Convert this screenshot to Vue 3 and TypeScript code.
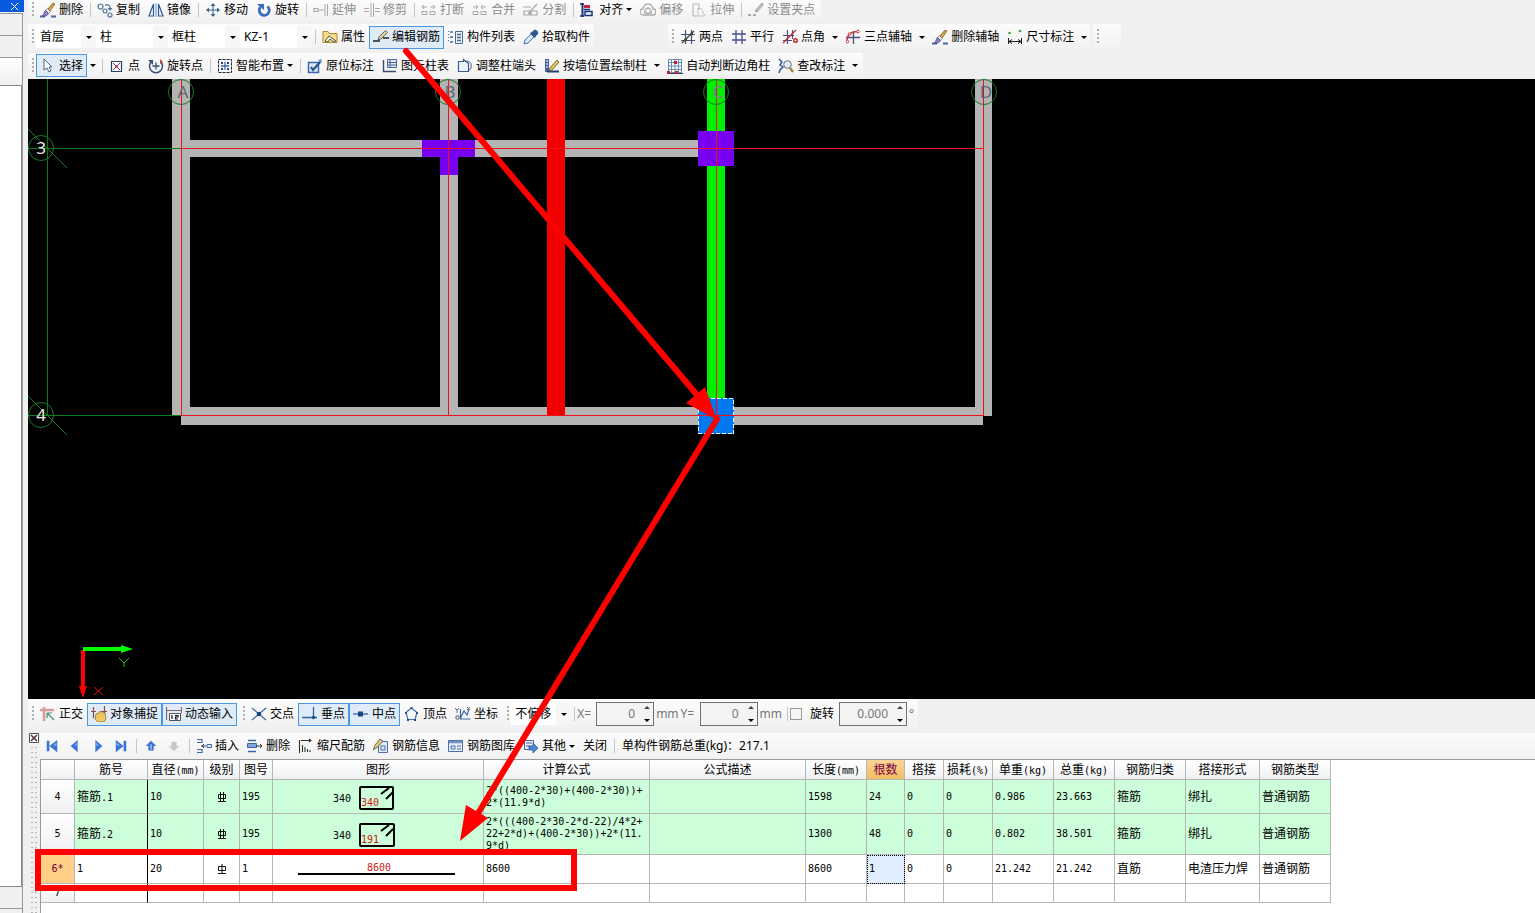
<script setup lang="ts">
import { ref } from 'vue'

interface Tool {
  kind: 'button' | 'select' | 'sep' | 'grip'
  icon?: string
  label?: string
  name?: string
  size?: 'short' | 'long'
  active?: boolean
  disabled?: boolean
  menu?: 'inline' | 'split'
}

interface Run {
  text: string
  cjk: boolean
}

interface BarRow {
  no: string
  name: string
  diameter: string
  grade: 'double' | 'single' | ''
  shapeNo: string
  shape: 'hoop' | 'hoopWide' | 'line' | ''
  shapeLabel: string
  formula: string[]
  rest: string[]
  height: 'row-normal' | 'row-tall' | 'row-low' | 'row-short'
  current?: boolean
}

const sep: Tool = { kind: 'sep' }
const grip: Tool = { kind: 'grip' }
const tool = (icon: string, label: string, extra: Partial<Tool> = {}): Tool => ({ kind: 'button', icon, label, ...extra })
const choice = (label: string, name: string, size: 'short' | 'long'): Tool => ({ kind: 'select', label, name, size })

const icons: Record<string, string> = {
  brush: '<path d="M0 14.5h5M11 14.5h5" stroke="#4a68a8" stroke-width="2"/><path d="M13 1l2 1-5 7-2-2z" fill="#d8a840" stroke="#6a5020" stroke-width=".7"/><path d="M7.500 6.500l3 3-2 2-3-3z" fill="#e8e8f0" stroke="#555" stroke-width=".6"/><path d="M5.500 8.500l3 3c-2 3-4 3-6 2 2-1 1-3 3-5z" fill="#8a86c8" stroke="#3c3870" stroke-width=".7"/>',
  copy: '<g fill="none" stroke="#52749c" stroke-width="1.200"><circle cx="3.500" cy="4.500" r="2.500"/><circle cx="8" cy="9" r="2"/><circle cx="13" cy="13" r="2"/><path d="M8 3.500a3 3 0 0 1 5 2.500"/></g><path d="M10.500 6h5L13 9z" fill="#52749c"/>',
  mirror: '<g fill="none" stroke="#2d5d9c" stroke-width="1.200"><path d="M5.500 2v12H1zM10.500 2v12H15z"/></g><path d="M8 1v14" stroke="#6f92c0" stroke-width="1"/>',
  move: '<path d="M8 1l2.500 3h-2v3.500H12v-2L15 8l-3 2.500v-2H8.500V12h2L8 15l-2.500-3h2V8.500H4v2L1 8l3-2.500v2h3.500V4h-2z" fill="#38608f"/>',
  rotate: '<path d="M4.500 5a5 5 0 1 0 7-.5" fill="none" stroke="#3c69b8" stroke-width="2.800"/><path d="M1 2h7v6z" fill="#3c69b8"/>',
  extend: '<g fill="none" stroke="#aaa"><path d="M1 6.500h4v3H1zM6 8h5" stroke-width="1.200"/><path d="M12 2v12M14.500 2v12"/></g>',
  trim: '<g fill="none" stroke="#aaa"><path d="M0 6.500h5M0 9.500h5M11 6.500h5M11 9.500h5M7 1v14M9.500 1v14"/></g>',
  breakat: '<g fill="none" stroke="#aaa"><path d="M1 5h5M9 5h5M3 3L1 5l2 2M12 3l2 2-2 2M1 9.500h5v3H1zM9 9.500h5v3H9z"/></g>',
  merge: '<g fill="none" stroke="#aaa"><path d="M1 5h5M9 5h5M4 3l2 2-2 2M11 3L9 5l2 2M1 9.500h5v3H1zM9 9.500h5v3H9z"/></g>',
  split: '<g fill="none" stroke="#aaa"><path d="M0 5h8M1 13V9h6v4zM8 13V9h6v4zM5 12l9-10" stroke-width="1.200"/></g>',
  align: '<path d="M2.500 1v14" stroke="#16367a" stroke-width="2"/><path d="M4 3h6v3H4z" fill="#d02040"/><path d="M5 9.500h7v4H5zM4 7.500h6" fill="none" stroke="#16367a" stroke-width="1.500"/><path d="M0 2h4M0 14h4" stroke="#16367a" stroke-width="1.500"/>',
  offset: '<g fill="none" stroke="#aaa" stroke-width="1.300"><path d="M3 13a3 3 0 0 1 0-6 5 5 0 0 1 10 0 3 3 0 0 1 0 6zM5 11a2 2 0 0 1 1-3 2 2 0 0 1 4 0 2 2 0 0 1 1 3z"/></g>',
  stretch: '<g fill="none" stroke="#b0b0b0"><path d="M2 2h6v4M2 2v12h4"/><path d="M7 6.500h3l4 7.500H7z" stroke-dasharray="2 1"/></g>',
  node: '<path d="M0 13h3M5 13h3" stroke="#aaa" stroke-width="2"/><path d="M14 1l1 2-6 7-2-1z" fill="#ccc" stroke="#999"/>',
  props: '<path d="M1 2.500h5l1 2h8v9H1z" fill="#f5dc8a" stroke="#b08828"/><path d="M3 12l4-5 7 5-2 1-4-3-2 3z" fill="#fff3c8" stroke="#555"/>',
  rebar: '<path d="M0 12h7M10 9h6" stroke="#222" stroke-width="1.400"/><path d="M12.500 1.500l2 2L8 10l-3 1 1-3z" fill="#e3cf9a" stroke="#444" stroke-width=".8"/>',
  list: '<g fill="none" stroke="#4c6894"><path d="M7.500 2.500h7v12h-7z" fill="#e8eef8"/><path d="M9 5.500h4M9 8.500h4M9 11.500h4M2 3h3M2 8h3M2 13h3" stroke-width="1.500"/><path d="M.5 2v12" stroke-dasharray="1 2"/></g>',
  dropper: '<path d="M1 15l1-4 6-6 3 3-6 6z" fill="#d9ecff" stroke="#3b6ea5"/><path d="M7 4l2-1 2-2c2-1 5 2 4 4l-2 2-1 2z" fill="#2c5a94"/>',
  twopoint: '<path d="M1 5.500h14M1 11.500h14M5.500 1v14M11.500 1v14" stroke="#4a5078" stroke-width="1.200"/><path d="M2 14L14 2" stroke="#3a5030" stroke-width="1.400"/><g fill="#3a5030"><circle cx="5.500" cy="11" r="1.500"/><circle cx="11.500" cy="5" r="1.500"/></g>',
  parallel: '<path d="M1 5h14M1 11h14M5 1v14M11 1v14" stroke="#4a4c88" stroke-width="1.300"/>',
  angle: '<path d="M1 6.500h11M1 11.500h9M5.500 1v14M10.500 1v9" stroke="#4a4c88" stroke-width="1.200"/><path d="M1 14L14 1" stroke="#c02828" stroke-width="1.300"/><circle cx="13.500" cy="11.500" r="1.800" fill="none" stroke="#c02828" stroke-width="1.400"/>',
  threepoint: '<path d="M1 8.500h14M8.500 2v13" stroke="#4a4c88" stroke-width="1.300"/><path d="M2 12C2 6 6 2.500 13 2.500" fill="none" stroke="#c83c3c" stroke-width="1.300"/><g fill="#fff" stroke="#c83c3c"><circle cx="2.500" cy="12.500" r="1.300"/><circle cx="4.500" cy="5" r="1.300"/><circle cx="13" cy="2.500" r="1.300"/></g>',
  dimension: '<path d="M1.500 9v6M14.500 9v6M2 12.500h12M5 10.500l-3 2 3 2M11 10.500l3 2-3 2" fill="none" stroke="#222"/><g fill="#49a04c"><circle cx="2.500" cy="4" r="1.300"/><circle cx="13" cy="2" r="1.300"/></g>',
  cursor: '<path d="M4 1v11l3-2 2 4 2-1-2-4h3z" fill="#fff" stroke="#51627c"/>',
  point: '<path d="M2.500 3.500h10v10h-10z" fill="#fff" stroke="#24406e" stroke-width="1.200"/><path d="M4 5l7 7M11 5l-7 7" stroke="#7a3a66"/><circle cx="7.500" cy="8.500" r="1.200" fill="#c22"/>',
  rotpoint: '<path d="M3 4a6.500 6.500 0 1 0 10 0" fill="none" stroke="#3b4f74" stroke-width="1.500"/><path d="M0 2h5v5z" fill="#3b4f74"/><path d="M8 4.500v7M4.500 8h7" stroke="#3b4f74" stroke-width="1.300"/><path d="M12 1v5l3-2z" fill="#c04040"/>',
  smart: '<path d="M1.500 1.500h13v13h-13z" fill="#f4f8ff" stroke="#222" stroke-dasharray="3 1"/><path d="M8 4v8M4 8h8" stroke="#3f67a7" stroke-width="1.300"/><g fill="#26436e"><path d="M4 4h2v2H4zM10 4h2v2h-2zM4 10h2v2H4zM10 10h2v2h-2z"/></g>',
  insitu: '<path d="M1.500 4.500h10v10h-10z" fill="#dbe7f7" stroke="#3c68a8" stroke-width="1.500"/><path d="M4 9l2 3 8-9" fill="none" stroke="#25548f" stroke-width="2.200"/><path d="M11 2l4-1-1 4z" fill="#6b9bd0"/>',
  coltable: '<path d="M5.500 1.500h9v8h-9zM5 4.500h9M5 7h9M8 2v7" fill="#dfe9f8" stroke="#4a6798"/><path d="M1.500 2v12M1 13.500h13" stroke="#3a4c70" stroke-width="1.400"/>',
  adjust: '<path d="M1.500 3.500h5v-2l5 4v8h-10z" fill="#eef3fb" stroke="#3d5b8c" stroke-width="1.200"/><path d="M8 3c5 0 7 2 6 7l-2.500 3" fill="none" stroke="#3d5b8c"/>',
  wallcol: '<path d="M1 1h4v13H1z" fill="#47679c"/><path d="M2 3h2M2 6h2M2 9h2" stroke="#fff"/><path d="M3 13.500h12" stroke="#26436e" stroke-width="2"/><path d="M13 2l2 2-7 8-3 1 1-3z" fill="#ecc65a" stroke="#5a4a20" stroke-width=".8"/>',
  corner: '<path d="M1.500 1.500h13v13h-13zM4.500 1v14M8 1v14M11.500 1v14M1 4.500h14M1 8h14M1 11.500h14" fill="#fff" stroke="#6989b8"/><path d="M0 15.500h16" stroke="#26436e"/><g fill="#c42020"><path d="M7 3h3v3H7zM0 13h3v3H0zM8 13h3v3H8z"/></g>',
  check: '<path d="M1 1l3 3-2 3 3 2-3 3-1 3" stroke="#2f5c9c" fill="none" stroke-width="1.500"/><circle cx="9.500" cy="6.500" r="3.800" fill="#e6eef8" stroke="#667"/><path d="M12 10l3 4" stroke="#a88340" stroke-width="2.500"/>',
  ortho: '<path d="M0 4h14M4 1v14" stroke="#d89c9c" stroke-width="2.600"/><path d="M7 7l7 7M7 7v5M7 7h5" stroke="#4a8a78" stroke-width="1.200"/>',
  snap: '<path d="M0 5.500h5M2.500 1v11M10 5.500h6M13.500 0v8" stroke="#8a4a4a" stroke-width="1.200"/><path d="M5 8l3-1 1-2 2 1 1 1 2 0 1 6-2 3H7l-3-3z" fill="#efc75c" stroke="#8a6820" stroke-width=".7"/>',
  dyn: '<path d="M.5 1v13M15.500 1v6M1 4.500h14" stroke="#86646c" stroke-width="1.200"/><path d="M3.500 7.500h11v7h-11z" fill="#fff" stroke="#555"/><path d="M6 9v4M9 9.500h3v1.500H9.500V13H12" fill="none" stroke="#111" stroke-width="1.200"/>',
  cross: '<path d="M1 2l14 12M15 2L1 14" stroke="#3c6298" stroke-width="1.200"/><circle cx="8" cy="8" r="2.300" fill="#1c4484"/>',
  perp: '<path d="M0 11.500h15M11.500 1v11" stroke="#3463a2" stroke-width="1.300"/><circle cx="11.500" cy="11.500" r="1.800" fill="#24518e"/>',
  mid: '<path d="M0 8h15" stroke="#3463a2" stroke-width="1.300"/><path d="M5 5.500h5v5H5z" fill="#1d4680"/>',
  vertex: '<path d="M7.500 2L13 6.500l-2 7H4l-2-7z" fill="none" stroke="#4671a8" stroke-width="1.200"/><g fill="#24518e"><path d="M6.500 1h2v2h-2zM12 6h2v2h-2zM1 6h2v2H1zM3 13h2v2H3zM10 13h2v2h-2z"/></g>',
  coord: '<path d="M5.500 3v10h10M5 13l4-8 3 4 2-6" fill="none" stroke="#3a67a2" stroke-width="1.200"/><path d="M0 2l2 2 2-2M2 4v3M12 1l3 3M15 1l-3 3M1 10h3v3H1z" fill="none" stroke="#666"/>',
  first: '<path d="M2 2h3v12H2zM14 1v14L5 8z" fill="#3a74d8"/><path d="M13 4v3L9 8z" fill="#8db8f4"/>',
  prev: '<path d="M11 1v14L3 8z" fill="#3a74d8"/><path d="M10 4v3L7 8z" fill="#8db8f4"/>',
  next: '<path d="M5 1v14l8-7z" fill="#3a74d8"/><path d="M6 4v3l3 1z" fill="#8db8f4"/>',
  last: '<path d="M11 2h3v12h-3zM2 1v14l9-7z" fill="#3a74d8"/><path d="M3 4v3l4 1z" fill="#8db8f4"/>',
  up: '<path d="M8 2l6 6h-3v5H5V8H2z" fill="#3a70d0"/><path d="M7 6h2v6H7z" fill="#8db8f4"/>',
  down: '<path d="M8 14l6-6h-3V3H5v5H2z" fill="#c8c8c8"/>',
  insert: '<path d="M1 1.500h5v3H1M1 11.500h5v3H1" fill="none" stroke="#3c68a8" stroke-width="1.200"/><path d="M5 8h5M8 6L6 8l2 2" fill="none" stroke="#333"/><path d="M11 6.500h4.500v3H11z" fill="#dfe9f8" stroke="#3c68a8"/>',
  remove: '<path d="M1 2.500h8M1 13.500h8" stroke="#3c68a8" stroke-width="1.500"/><path d="M.5 5.500h9v4h-9z" fill="#7fa5da" stroke="#3c68a8"/><path d="M9 8h6M13 6l2 2-2 2" fill="none" stroke="#333"/>',
  scale: '<path d="M1.500 2v13M3 2.500h10M11 1l2 1.500L11 4M4.500 7v7M7 9v5M9.500 11v3M12 12v2" fill="none" stroke="#333" stroke-width="1.100"/>',
  info: '<path d="M5.500 3.500h9v11h-9zM8 12V8h4v4z" fill="#e1eaf7" stroke="#4d6fa1"/><path d="M0 12l5-3 5-6-3-2-5 6z" fill="#dfc27a" stroke="#555" stroke-width=".8"/>',
  library: '<path d="M.5 2.500h14v11H.5z" fill="#e6eefa" stroke="#4a6fa8"/><path d="M1 4h13" stroke="#6c92c8" stroke-width="2.500"/><path d="M3 8h4v3H3zM9 8h4M9 11h4" fill="none" stroke="#4a6fa8"/>',
  other: '<path d="M1.500 2.500h9v9h-9zM3 5h6M3 8h4" fill="#e8eefa" stroke="#4a6798"/><path d="M6 8h4V5l5 5-5 5v-3H6z" fill="#4f87d6" stroke="#2b579c" stroke-width=".8"/>',
}

const editRow: Tool[] = [
  grip, tool('brush', '删除'), sep, tool('copy', '复制'), tool('mirror', '镜像'), sep,
  tool('move', '移动'), tool('rotate', '旋转'), sep,
  tool('extend', '延伸', { disabled: true }), tool('trim', '修剪', { disabled: true }), sep,
  tool('breakat', '打断', { disabled: true }), tool('merge', '合并', { disabled: true }), tool('split', '分割', { disabled: true }), sep,
  tool('align', '对齐', { menu: 'inline' }), tool('offset', '偏移', { disabled: true }), tool('stretch', '拉伸', { disabled: true }), sep,
  tool('node', '设置夹点', { disabled: true }),
]
const componentRow: Tool[] = [
  grip, choice('首层', '楼层', 'short'), choice('柱', '构件类型', 'long'), choice('框柱', '构件类别', 'long'), choice('KZ-1', '构件', 'long'), sep,
  tool('props', '属性'), tool('rebar', '编辑钢筋', { active: true }), tool('list', '构件列表'), tool('dropper', '拾取构件'),
]
const axisRow: Tool[] = [
  grip, tool('twopoint', '两点'), tool('parallel', '平行'), tool('angle', '点角', { menu: 'split' }),
  tool('threepoint', '三点辅轴', { menu: 'split' }), tool('brush', '删除辅轴'), tool('dimension', '尺寸标注', { menu: 'split' }),
]
const drawRow: Tool[] = [
  grip, tool('cursor', '选择', { active: true, menu: 'split' }), sep, tool('point', '点'), tool('rotpoint', '旋转点'), sep,
  tool('smart', '智能布置', { menu: 'inline' }), sep, tool('insitu', '原位标注'), tool('coltable', '图元柱表'), tool('adjust', '调整柱端头'),
  tool('wallcol', '按墙位置绘制柱', { menu: 'split' }), tool('corner', '自动判断边角柱'), tool('check', '查改标注', { menu: 'split' }),
]
const modeRow: Tool[] = [grip, tool('ortho', '正交'), tool('snap', '对象捕捉', { active: true }), tool('dyn', '动态输入', { active: true })]
const snapRow: Tool[] = [
  grip, tool('cross', '交点'), tool('perp', '垂点', { active: true }), tool('mid', '中点', { active: true }), tool('vertex', '顶点'), tool('coord', '坐标'),
]
const offsetRow: Tool[] = [grip, choice('不偏移', '偏移方式', 'short'), sep]
const rebarRow: Tool[] = [
  tool('insert', '插入'), tool('remove', '删除'), tool('scale', '缩尺配筋'), tool('info', '钢筋信息'), tool('library', '钢筋图库'),
  tool('other', '其他', { menu: 'inline' }), { kind: 'button', label: '关闭' }, sep,
]
const groups = [
  { id: 'line-top', bars: [{ id: 'edit', tools: editRow }] },
  { id: 'line-middle', bars: [{ id: 'component', tools: componentRow }, { id: 'axes', tools: axisRow }, { id: 'spare', tools: [grip] }] },
  { id: 'line-draw', bars: [{ id: 'draw', tools: drawRow }] },
]
const bottomBars = [
  { id: 'mode', tools: modeRow },
  { id: 'snap', tools: snapRow },
  { id: 'shift', tools: offsetRow },
]
const navButtons = [
  { icon: 'first', title: '首行' }, { icon: 'prev', title: '上一行' }, { icon: 'next', title: '下一行' }, { icon: 'last', title: '末行' },
]

const headers = ['', '筋号', '直径(mm)', '级别', '图号', '图形', '计算公式', '公式描述', '长度(mm)', '根数', '搭接', '损耗(%)', '单重(kg)', '总重(kg)', '钢筋归类', '搭接形式', '钢筋类型']
const rows: BarRow[] = [
  { no: '4', name: '箍筋.1', diameter: '10', grade: 'double', shapeNo: '195', shape: 'hoop', shapeLabel: '340', formula: ['2*((400-2*30)+(400-2*30))+', '2*(11.9*d)'], rest: ['', '1598', '24', '0', '0', '0.986', '23.663', '箍筋', '绑扎', '普通钢筋'], height: 'row-normal' },
  { no: '5', name: '箍筋.2', diameter: '10', grade: 'double', shapeNo: '195', shape: 'hoopWide', shapeLabel: '191', formula: ['2*(((400-2*30-2*d-22)/4*2+', '22+2*d)+(400-2*30))+2*(11.', '9*d)'], rest: ['', '1300', '48', '0', '0', '0.802', '38.501', '箍筋', '绑扎', '普通钢筋'], height: 'row-tall' },
  { no: '6*', name: '1', diameter: '20', grade: 'single', shapeNo: '1', shape: 'line', shapeLabel: '8600', formula: ['8600'], rest: ['', '8600', '1', '0', '0', '21.242', '21.242', '直筋', '电渣压力焊', '普通钢筋'], height: 'row-low', current: true },
  { no: '7', name: '', diameter: '', grade: '', shapeNo: '', shape: '', shapeLabel: '', formula: [], rest: ['', '', '', '', '', '', '', '', '', ''], height: 'row-short' },
]

const COUNT_COLUMN = 2

function runs(text: string): Run[] {
  return (text.match(/[\u4e00-\u9fff]+|[^\u4e00-\u9fff]+/g) ?? []).map((part) => ({ text: part, cjk: /[\u4e00-\u9fff]/.test(part) }))
}

const axisLetters = [
  { x: 181, label: 'A', tone: '#5c6a70' }, { x: 448, label: 'B', tone: '#5c6a78' }, { x: 716, label: 'C', tone: '#94709c' }, { x: 984, label: 'D', tone: '#5c6a78' },
]
const axisNumbers = [{ y: 148, label: '3' }, { y: 415, label: '4' }]

const offsetX = ref('0')
const offsetY = ref('0')
const angle = ref('0.000')
</script>

<template>
  <div class="app">
    <aside class="dock">
      <header class="dock-title">
        <button class="dock-close" aria-label="关闭">
          <svg width="9" height="9" viewBox="0 0 9 9"><path d="M1 1l7 7M8 1L1 8" stroke="#fff" /></svg>
        </button>
      </header>
      <div class="dock-body">
        <div class="dock-cell"></div>
        <div class="dock-cell"></div>
        <div class="dock-space"></div>
        <div class="dock-list"></div>
        <div class="dock-cell foot"></div>
      </div>
    </aside>

    <main class="main">
      <div class="bars">
        <div v-for="group in groups" :key="group.id" class="line" :class="group.id">
          <div v-for="bar in group.bars" :key="bar.id" class="bar" :class="bar.id">
            <template v-for="(t, i) in bar.tools" :key="i">
              <span v-if="t.kind === 'grip'" class="grip"></span>
              <span v-else-if="t.kind === 'sep'" class="sep"></span>
              <label v-else-if="t.kind === 'select'" class="combo" :class="t.size">
                <select :aria-label="t.name"><option>{{ t.label }}</option></select>
                <span class="drop"><i class="caret"></i></span>
              </label>
              <template v-else>
                <button class="tool" :class="{ active: t.active }" :disabled="t.disabled">
                  <svg v-if="t.icon" class="icon" viewBox="0 0 16 16" v-html="icons[t.icon]"></svg>
                  <span>{{ t.label }}</span>
                  <i v-if="t.menu === 'inline'" class="caret"></i>
                </button>
                <button v-if="t.menu === 'split'" class="split" :aria-label="t.label + '选项'"><i class="caret"></i></button>
              </template>
            </template>
          </div>
        </div>
      </div>

      <section class="canvas">
        <svg width="100%" height="100%">
          <g transform="translate(-28 -79)" shape-rendering="crispEdges">
            <g fill="#b4b4b4">
              <rect x="172" y="79" width="18" height="336" />
              <rect x="440" y="79" width="18" height="328" />
              <rect x="975" y="79" width="17" height="337" />
              <rect x="190" y="140" width="508" height="17" />
              <rect x="181" y="407" width="802" height="18" />
            </g>
            <rect x="547" y="79" width="18" height="337" fill="#f00000" />
            <rect x="707" y="79" width="18" height="320" fill="#00f000" />
            <path d="M422 140h53v17h-17v18h-18v-18h-18zM698 131h36v35h-36z" fill="#7800f0" />
            <rect x="698" y="398" width="36" height="36" fill="#0078f0" />
            <rect x="698.5" y="398.5" width="35" height="35" fill="none" stroke="#fff" stroke-dasharray="4 2" />
            <path d="M47 79h1v337h-1zM28 148h153v1H28zM28 415h153v1H28z" fill="#087c18" />
            <path d="M181 79h1v337h-1zM448 79h1v337h-1zM716 79h1v337h-1zM983 79h1v337h-1zM181 148h803v1H181zM181 415h803v1H181z" fill="#ee1020" />
          </g>
          <g transform="translate(-28 -79)" class="marks">
            <g v-for="n in axisNumbers" :key="n.label">
              <circle cx="41" :cy="n.y" r="12.500" />
              <path :d="`M28 ${n.y - 19}l39 39`" />
              <text x="41" :y="n.y + 6" fill="#e8e8e8">{{ n.label }}</text>
            </g>
            <g v-for="a in axisLetters" :key="a.label">
              <circle :cx="a.x" cy="92" r="12.500" />
              <text :x="a.x + 2" y="98" :fill="a.tone">{{ a.label }}</text>
            </g>
          </g>
          <g transform="translate(-28 -79)">
            <path d="M83 650v38" stroke="#f00" stroke-width="4" />
            <path d="M79 686h8l-4 12z" fill="#f00" />
            <path d="M83 649h39" stroke="#0f0" stroke-width="4" />
            <path d="M121 645l12 4-12 4z" fill="#0f0" />
            <path d="M119 658l5 5 5-5M124 663v4" fill="none" stroke="#20c020" />
            <path d="M94 687l9 8M103 687l-9 8" stroke="#e01010" />
          </g>
        </svg>
      </section>

      <div class="line bottom">
        <div v-for="bar in bottomBars" :key="bar.id" class="bar" :class="bar.id">
          <template v-for="(t, i) in bar.tools" :key="i">
            <span v-if="t.kind === 'grip'" class="grip"></span>
            <span v-else-if="t.kind === 'sep'" class="sep"></span>
            <label v-else-if="t.kind === 'select'" class="combo" :class="t.size">
              <select :aria-label="t.name"><option>{{ t.label }}</option></select>
              <span class="drop"><i class="caret"></i></span>
            </label>
            <button v-else class="tool" :class="{ active: t.active }">
              <svg v-if="t.icon" class="icon" viewBox="0 0 16 16" v-html="icons[t.icon]"></svg>
              <span>{{ t.label }}</span>
            </button>
          </template>
        </div>
        <div class="bar fields">
          <label for="offset-x">X=</label>
          <span class="spin"><input id="offset-x" v-model="offsetX" disabled /><span class="steps"><i class="caret rise"></i><i class="caret"></i></span></span>
          <span class="unit">mm</span>
          <label for="offset-y">Y=</label>
          <span class="spin"><input id="offset-y" v-model="offsetY" disabled /><span class="steps"><i class="caret rise"></i><i class="caret"></i></span></span>
          <span class="unit">mm</span>
          <span class="sep"></span>
          <label class="turn"><input type="checkbox" />旋转</label>
          <span class="spin wide"><input v-model="angle" aria-label="旋转角度" disabled /><span class="steps"><i class="caret rise"></i><i class="caret"></i></span></span>
          <span class="degree">°</span>
        </div>
      </div>

      <section class="panel">
        <div class="handle">
          <button class="handle-close" aria-label="关闭面板">
            <svg width="10" height="10" viewBox="0 0 10 10"><path d="M.5.5h9v9h-9z" fill="#fff" stroke="#555" /><path d="M2 2l6 6M8 2L2 8" stroke="#503038" stroke-width="1.500" /></svg>
          </button>
          <div class="dots"></div>
        </div>
        <div class="panel-body">
          <div class="bar rebar">
            <button v-for="n in navButtons" :key="n.icon" class="nav" :title="n.title">
              <svg class="icon" viewBox="0 0 16 16" v-html="icons[n.icon]"></svg>
            </button>
            <span class="sep"></span>
            <button class="nav" title="上移"><svg class="icon" viewBox="0 0 16 16" v-html="icons.up"></svg></button>
            <button class="nav" title="下移" disabled><svg class="icon" viewBox="0 0 16 16" v-html="icons.down"></svg></button>
            <span class="sep"></span>
            <template v-for="(t, i) in rebarRow" :key="i">
              <span v-if="t.kind === 'sep'" class="sep"></span>
              <button v-else class="tool">
                <svg v-if="t.icon" class="icon" viewBox="0 0 16 16" v-html="icons[t.icon]"></svg>
                <span>{{ t.label }}</span>
                <i v-if="t.menu === 'inline'" class="caret"></i>
              </button>
            </template>
            <span class="total">单构件钢筋总重(kg)：217.1</span>
          </div>

          <div class="sheet">
            <table>
              <colgroup>
                <col v-for="(h, i) in headers" :key="i" :class="'c' + i" />
              </colgroup>
              <thead>
                <tr>
                  <th v-for="(h, i) in headers" :key="i" :class="{ picked: h === '根数' }">
                    <span v-for="(r, k) in runs(h)" :key="k" :class="{ cjk: r.cjk }">{{ r.text }}</span>
                  </th>
                </tr>
              </thead>
              <tbody>
                <tr v-for="row in rows" :key="row.no" :class="[row.height, { current: row.current }]">
                  <th scope="row">{{ row.no }}</th>
                  <td class="name"><span v-for="(r, k) in runs(row.name)" :key="k" :class="{ cjk: r.cjk }">{{ r.text }}</span></td>
                  <td>{{ row.diameter }}</td>
                  <td class="grade">
                    <svg v-if="row.grade" width="10" height="10" viewBox="0 0 10 10" fill="none" stroke="#111">
                      <path d="M1.500 2.500h7v4h-7zM1 9.500h8" />
                      <path :d="row.grade === 'double' ? 'M3.500 0v9M6.500 0v9' : 'M5 0v9'" />
                    </svg>
                  </td>
                  <td>{{ row.shapeNo }}</td>
                  <td class="shape">
                    <svg v-if="row.shape === 'hoop' || row.shape === 'hoopWide'" width="210" height="30">
                      <text x="60" y="20">340</text>
                      <rect x="87" y="5" :width="row.shape === 'hoop' ? 33 : 34" height="22" rx="1" />
                      <path d="M108 12l8-6M113 17l7-7" />
                      <text x="88" y="24" class="red">{{ row.shapeLabel }}</text>
                    </svg>
                    <svg v-else-if="row.shape === 'line'" width="210" height="28">
                      <path d="M25 19h157" />
                      <text x="94" y="16" class="red">{{ row.shapeLabel }}</text>
                    </svg>
                  </td>
                  <td class="formula"><div v-for="line in row.formula" :key="line">{{ line }}</div></td>
                  <td v-for="(value, k) in row.rest" :key="k" :class="{ focus: row.current && k === COUNT_COLUMN }">
                    <span v-for="(r, m) in runs(value)" :key="m" :class="{ cjk: r.cjk }">{{ r.text }}</span>
                  </td>
                </tr>
              </tbody>
            </table>
          </div>
        </div>
      </section>
    </main>

    <svg class="notes" width="100%" height="100%">
      <g fill="none" stroke="#f00" stroke-width="6" stroke-linecap="round">
        <path d="M406 51L703 402" />
        <path d="M717 419L477 815" />
        <path d="M38 852h536v36H38z" stroke-linecap="butt" />
      </g>
      <path d="M717 420L705 387 686 403zM460 841l6-36 22 13z" fill="#f00" />
    </svg>
  </div>
</template>

<style>
body {
  margin: 0;
  background: #f0f0f0;
}
</style>

<style scoped>
.app {
  position: relative;
  display: flex;
  gap: 4px;
  height: 100vh;
  overflow: hidden;
  background: #f0f0f0;
  color: #000;
  font: 12px/16px "Noto Sans", "Noto Sans CJK SC", sans-serif;
}
button, select, input {
  margin: 0;
  padding: 0;
  border: 0;
  border-radius: 0;
  background: none;
  color: inherit;
  font: inherit;
}
.dock {
  display: flex;
  flex-direction: column;
  flex: 0 0 24px;
}
.dock-title {
  display: flex;
  justify-content: flex-end;
  height: 12px;
  margin-bottom: 1px;
  padding-right: 5px;
  background: #0a5ae0;
}
.dock-close {
  display: flex;
  align-items: center;
}
.dock-body {
  display: flex;
  flex: 1;
  flex-direction: column;
  margin-right: 1px;
  border-top: 1px solid #999;
  border-right: 1px solid #999;
}
.dock-cell {
  height: 21px;
  border-bottom: 1px solid #999;
}
.dock-space {
  height: 27px;
  background: linear-gradient(#fff, #f0f0f0);
}
.dock-list {
  flex: 1;
  border: solid #888;
  border-width: 1px 1px 1px 0;
  background: #fff;
}
.foot {
  margin-bottom: 4px;
}
.main {
  display: flex;
  flex: 1;
  flex-direction: column;
  min-width: 0;
}
.bars {
  display: flex;
  flex-direction: column;
  gap: 3px;
}
.line {
  display: flex;
  height: 26px;
}
.line-top {
  height: 21px;
}
.bar {
  display: flex;
  align-items: center;
  flex: none;
  background: linear-gradient(#fcfcfc, #f1f1f1);
  white-space: nowrap;
}
.edit {
  padding-right: 2px;
  padding-bottom: 2px;
}
.draw {
  padding-right: 2px;
}
.axes {
  margin-left: 74px;
}
.spare {
  width: 28px;
  margin-left: 3px;
}
.grip {
  flex: none;
  width: 2px;
  height: 16px;
  margin: 0 2px 0 4px;
  background: repeating-linear-gradient(#b0b0b0 0 2px, transparent 2px 4px);
}
.sep {
  flex: none;
  width: 1px;
  height: 14px;
  margin: 0 2px 0 3px;
  background: #c4c4c4;
}
.tool {
  display: flex;
  align-items: center;
  box-sizing: border-box;
  height: 23px;
  gap: 3px;
  padding: 0 4px;
  white-space: nowrap;
}
.tool.active {
  background: #dfebf7;
  box-shadow: inset 0 0 0 1px #4a98e4;
}
.line-top .tool {
  height: 19px;
}
.line-draw {
  align-items: flex-start;
}
.draw {
  height: 25px;
}
.tool:disabled {
  color: #8c8c8c;
}
.icon {
  display: block;
  flex: none;
  width: 16px;
  height: 16px;
}
.caret {
  display: block;
  width: 0;
  height: 0;
  border: 3px solid transparent;
  border-top-color: #000;
  border-bottom-width: 0;
}
.caret.rise {
  border-top-width: 0;
  border-bottom: 3px solid #444;
}
.split {
  display: flex;
  align-items: center;
  justify-content: center;
  width: 12px;
  height: 23px;
}
.combo {
  position: relative;
  display: flex;
  height: 22px;
  background: #fff;
}
.combo.short {
  width: 60px;
}
.combo.long {
  width: 72px;
}
.combo select {
  width: 100%;
  padding-left: 4px;
  appearance: none;
}
.drop {
  position: absolute;
  inset: 0 0 0 auto;
  display: flex;
  align-items: center;
  justify-content: center;
  width: 15px;
  background: #f6f6f6;
  pointer-events: none;
}
.canvas {
  flex: 1;
  min-height: 0;
  overflow: hidden;
  background: #000;
}
.canvas > svg {
  display: block;
}
.marks circle, .marks path {
  fill: none;
  stroke: #187a28;
}
.marks text {
  font: 17px "Noto Sans", sans-serif;
  text-anchor: middle;
}
.bottom {
  height: 30px;
  margin-bottom: 4px;
}
.snap {
  padding-left: 2px;
}
.shift {
  padding-left: 1px;
}
.fields {
  color: #777;
}
.fields label {
  width: 19px;
}
.unit {
  min-width: 22px;
  margin: 0 2px;
}
.degree {
  margin: 0 4px 0 2px;
}
.spin {
  position: relative;
  display: flex;
  box-sizing: border-box;
  width: 58px;
  height: 24px;
  border: 1px solid #707070;
  background: #f4f4f4;
}
.spin.wide {
  width: 68px;
}
.spin input {
  width: 100%;
  min-width: 0;
  padding-right: 18px;
  text-align: right;
}
.steps {
  position: absolute;
  inset: 3px 3px 3px auto;
  display: flex;
  flex-direction: column;
  justify-content: space-between;
}
.fields .turn {
  display: flex;
  align-items: center;
  width: auto;
  gap: 8px;
  margin-right: 5px;
  color: #000;
}
.turn input {
  width: 12px;
  height: 12px;
  border: 1px solid #999;
  appearance: none;
}
.panel {
  display: flex;
}
.handle {
  display: flex;
  flex-direction: column;
  align-items: flex-start;
  width: 11px;
  padding-left: 1px;
}
.handle-close {
  display: flex;
  margin-bottom: 2px;
}
.dots {
  flex: 1;
  width: 8px;
  margin-left: 1px;
  background: radial-gradient(circle, #b4b4b4 1px, transparent 1px) 0 0 / 4px 5px;
}
.panel-body {
  flex: 1;
  min-width: 0;
}
.rebar {
  height: 26px;
}
.nav {
  display: flex;
  align-items: center;
  justify-content: center;
  width: 23px;
  height: 23px;
}
.nav .icon {
  width: 14px;
  height: 14px;
}
.nav + .sep {
  margin-left: 4px;
}
.total {
  margin-left: 5px;
}
.sheet {
  padding-bottom: 10px;
  border-top: 1px solid #999;
  border-left: 1px solid #999;
  background: #fff;
}
table {
  width: 1290px;
  border-spacing: 0;
  table-layout: fixed;
  font: 10px/12px "DejaVu Sans Mono", "Noto Sans CJK SC", monospace;
}
.cjk {
  font-size: 12px;
  font-family: "Noto Sans CJK SC", sans-serif;
}
.c0 { width: 34px; }
.c1 { width: 73px; }
.c2 { width: 56px; }
.c3 { width: 36px; }
.c4 { width: 33px; }
.c5 { width: 211px; }
.c6 { width: 166px; }
.c7 { width: 156px; }
.c8 { width: 61px; }
.c9 { width: 38px; }
.c10 { width: 39px; }
.c11 { width: 49px; }
.c12, .c13 { width: 61px; }
.c14 { width: 71px; }
.c15 { width: 74px; }
.c16 { width: 71px; }
th, td {
  overflow: hidden;
  box-sizing: border-box;
  padding: 0 0 0 2px;
  border: solid #b4b8b4;
  border-width: 0 1px 1px 0;
  text-align: left;
  white-space: nowrap;
}
th {
  padding: 0;
  background: linear-gradient(#fff, #eff0f3);
  font-weight: 400;
  text-align: center;
}
thead tr {
  height: 20px;
}
th.picked {
  background: linear-gradient(#f9d49a, #f0bd62);
  color: #800040;
}
.row-normal {
  height: 34px;
}
.row-tall {
  height: 41px;
}
.row-low {
  height: 29px;
}
.row-short {
  height: 19px;
}
.row-normal td, .row-tall td {
  background: #ccffd9;
}
td.name {
  border-right-color: #000;
}
.current th {
  background: #ffcf87;
  color: #700030;
}
td.grade {
  padding: 0;
  text-align: center;
}
.grade svg {
  display: inline-block;
  vertical-align: middle;
}
td.shape {
  padding: 0;
}
.shape svg {
  display: block;
}
.shape rect, .shape path {
  fill: none;
  stroke: #000;
  stroke-width: 2px;
}
.shape .red {
  fill: #d01818;
}
td.focus {
  outline: 1px dotted #000;
  outline-offset: -1px;
  background: #e0eeff;
}
.notes {
  position: absolute;
  inset: 0;
  pointer-events: none;
}
</style>
